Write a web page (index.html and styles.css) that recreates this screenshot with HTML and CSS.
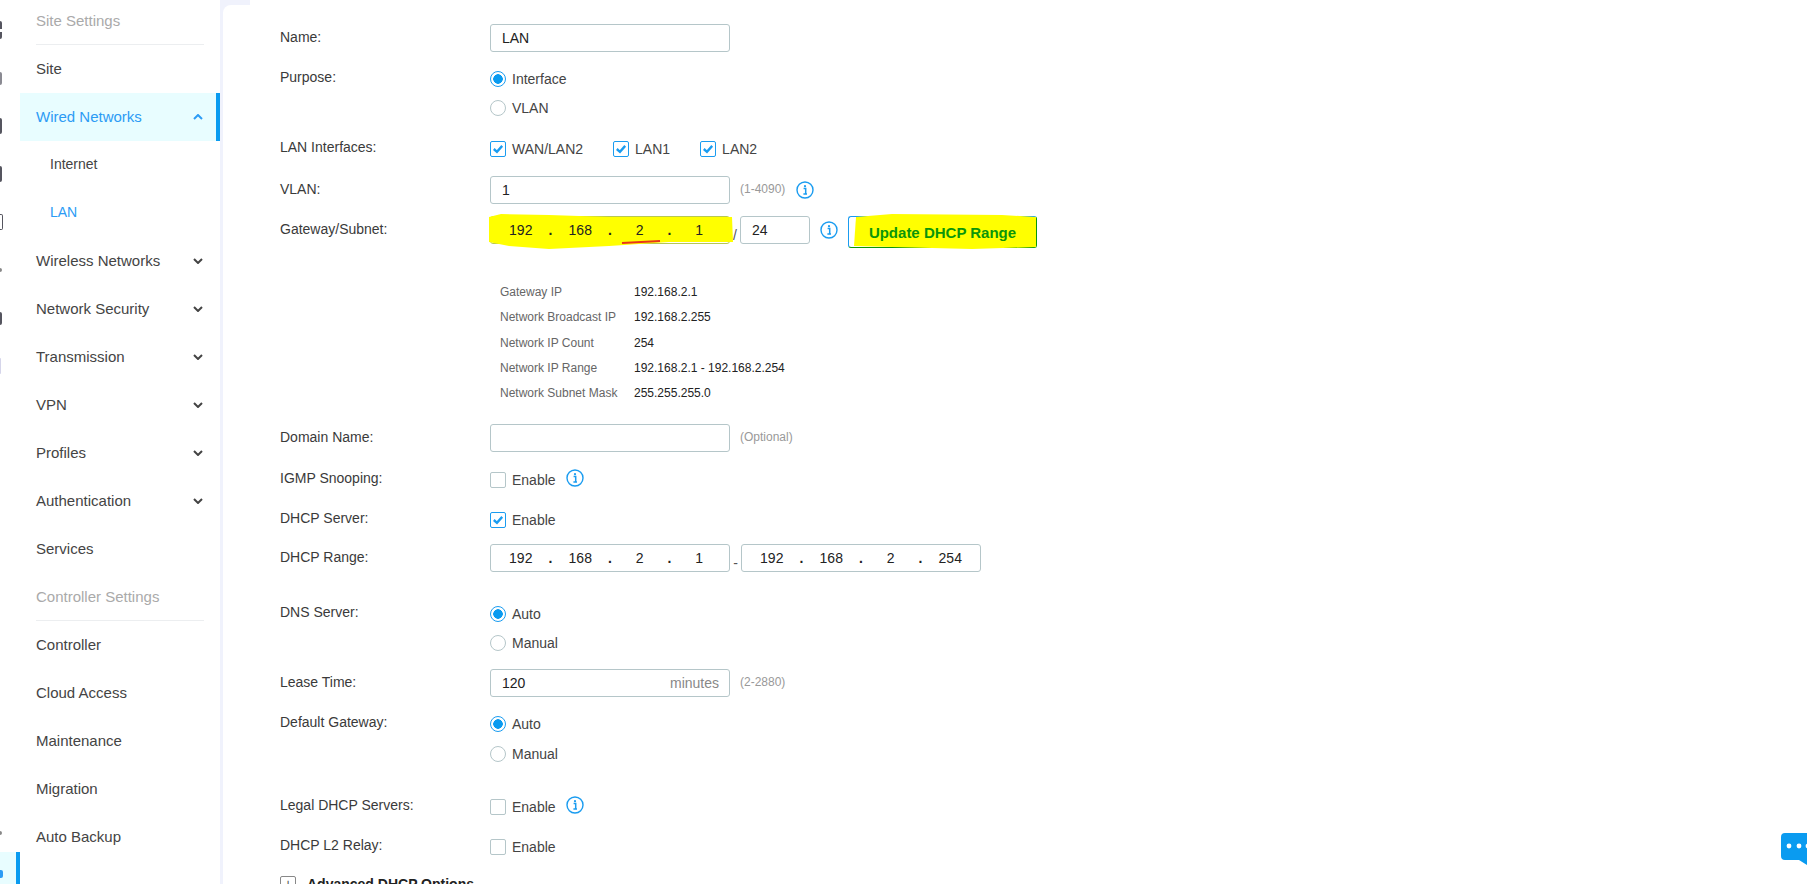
FILE: index.html

```html
<!DOCTYPE html>
<html>
<head>
  <title>LAN Settings</title>
  <meta name="viewport" content="width=device-width, initial-scale=1.0" />
  <link rel="stylesheet" href="styles.css">
</head>
<body>
  <svg class="defs" width="0" height="0">
    <symbol id="info" viewBox="0 0 18 18">
      <circle cx="9" cy="9" r="8" fill="none" stroke="currentColor" stroke-width="1.4" />
      <circle cx="9" cy="5.2" r="1.1" fill="currentColor" />
      <path d="M7.6 7.6H9.7V12.6M7.4 13.1H11" fill="none" stroke="currentColor" stroke-width="1.5" />
    </symbol>
    <symbol id="down" viewBox="0 0 10 6">
      <path d="M1 1L5 5L9 1" fill="none" stroke="currentColor" stroke-width="2" />
    </symbol>
    <symbol id="up" viewBox="0 0 10 6">
      <path d="M1 5L5 1L9 5" fill="none" stroke="currentColor" stroke-width="2" />
    </symbol>
    <symbol id="tick" viewBox="0 0 16 16">
      <path d="M3.2 8L6.8 11.2L12.8 4.4" fill="none" stroke="currentColor" stroke-width="2.7" />
    </symbol>
  </svg>

  <div class="rail">
    <span class="rail-slot"><i class="mark mark-split"></i></span>
    <span class="rail-slot"><i class="mark mark-md mark-soft"></i></span>
    <span class="rail-slot"><i class="mark mark-lg"></i></span>
    <span class="rail-slot"><i class="mark mark-lg"></i></span>
    <span class="rail-slot"><i class="mark mark-lg mark-open"></i></span>
    <span class="rail-slot"><i class="mark mark-dot"></i></span>
    <span class="rail-slot"><i class="mark mark-md"></i></span>
    <span class="rail-slot"><i class="mark mark-lg mark-pale"></i></span>
    <span class="rail-slot rail-push"><i class="mark mark-dot"></i></span>
    <span class="rail-active"><i class="mark mark-blue"></i></span>
  </div>

  <nav class="sidebar">
    <div class="nav-head">Site Settings</div>
    <a class="nav-item">Site</a>
    <a class="nav-item active">Wired Networks <svg class="chevron"><use href="#up" /></svg></a>
    <a class="nav-item sub">Internet</a>
    <a class="nav-item sub current">LAN</a>
    <a class="nav-item">Wireless Networks <svg class="chevron"><use href="#down" /></svg></a>
    <a class="nav-item">Network Security <svg class="chevron"><use href="#down" /></svg></a>
    <a class="nav-item">Transmission <svg class="chevron"><use href="#down" /></svg></a>
    <a class="nav-item">VPN <svg class="chevron"><use href="#down" /></svg></a>
    <a class="nav-item">Profiles <svg class="chevron"><use href="#down" /></svg></a>
    <a class="nav-item">Authentication <svg class="chevron"><use href="#down" /></svg></a>
    <a class="nav-item">Services</a>
    <div class="nav-head nav-head-tall">Controller Settings</div>
    <a class="nav-item">Controller</a>
    <a class="nav-item">Cloud Access</a>
    <a class="nav-item">Maintenance</a>
    <a class="nav-item">Migration</a>
    <a class="nav-item">Auto Backup</a>
  </nav>

  <main class="main">
    <div class="row">
      <div class="row-label">Name:</div>
      <div class="inline"><div class="input">LAN</div></div>
    </div>

    <div class="row mt-17 row-choice">
      <div class="row-label">Purpose:</div>
      <div class="stack">
        <div class="opt"><span class="radio on"></span>Interface</div>
        <div class="opt"><span class="radio"></span>VLAN</div>
      </div>
    </div>

    <div class="row mt-21 row-choice">
      <div class="row-label">LAN Interfaces:</div>
      <div class="inline wide">
        <div class="opt"><span class="check on"><svg><use href="#tick" /></svg></span>WAN/LAN2</div>
        <div class="opt"><span class="check on"><svg><use href="#tick" /></svg></span>LAN1</div>
        <div class="opt"><span class="check on"><svg><use href="#tick" /></svg></span>LAN2</div>
      </div>
    </div>

    <div class="row mt-17">
      <div class="row-label">VLAN:</div>
      <div class="inline">
        <div class="input">1</div>
        <span class="hint">(1-4090)</span>
        <svg class="info"><use href="#info" /></svg>
      </div>
    </div>

    <div class="row mt-12">
      <div class="row-label">Gateway/Subnet:</div>
      <div class="inline">
        <div class="input ip-input marked">
          <svg class="marker" viewBox="0 0 244 36" preserveAspectRatio="none">
            <path d="M0 3L12 0L60 1L120 3L243 3L244 28L180 28L120 32L60 35L20 32L0 28Z" fill="#ffff00" />
            <path d="M133 29L171 27" fill="none" stroke="#e8351a" stroke-width="2" />
          </svg>
          <span class="octet">192</span><span class="dot">.</span>
          <span class="octet">168</span><span class="dot">.</span>
          <span class="octet">2</span><span class="dot">.</span>
          <span class="octet">1</span>
        </div>
        <span class="sep">/</span>
        <div class="input input-mask">24</div>
        <svg class="info info-gateway"><use href="#info" /></svg>
        <button class="update-btn">
          <svg class="marker" viewBox="0 0 184 36" preserveAspectRatio="none">
            <path d="M4 3L40 0L150 1L184 3L184 33L120 35L40 33L2 32Z" fill="#ffff00" />
          </svg>
          <span class="update-text">Update DHCP Range</span>
        </button>
      </div>
    </div>

    <div class="details">
      <div class="detail"><span class="detail-key">Gateway IP</span><span>192.168.2.1</span></div>
      <div class="detail"><span class="detail-key">Network Broadcast IP</span><span>192.168.2.255</span></div>
      <div class="detail"><span class="detail-key">Network IP Count</span><span>254</span></div>
      <div class="detail"><span class="detail-key">Network IP Range</span><span>192.168.2.1 - 192.168.2.254</span></div>
      <div class="detail"><span class="detail-key">Network Subnet Mask</span><span>255.255.255.0</span></div>
    </div>

    <div class="row mt-18">
      <div class="row-label">Domain Name:</div>
      <div class="inline">
        <div class="input"></div>
        <span class="hint">(Optional)</span>
      </div>
    </div>

    <div class="row mt-18 row-choice">
      <div class="row-label">IGMP Snooping:</div>
      <div class="inline">
        <div class="opt"><span class="check"></span>Enable</div>
        <svg class="info info-opt"><use href="#info" /></svg>
      </div>
    </div>

    <div class="row mt-20 row-choice">
      <div class="row-label">DHCP Server:</div>
      <div class="inline">
        <div class="opt"><span class="check on"><svg><use href="#tick" /></svg></span>Enable</div>
      </div>
    </div>

    <div class="row mt-14">
      <div class="row-label">DHCP Range:</div>
      <div class="inline">
        <div class="input ip-input">
          <span class="octet">192</span><span class="dot">.</span>
          <span class="octet">168</span><span class="dot">.</span>
          <span class="octet">2</span><span class="dot">.</span>
          <span class="octet">1</span>
        </div>
        <span class="sep">-</span>
        <div class="input ip-input">
          <span class="octet">192</span><span class="dot">.</span>
          <span class="octet">168</span><span class="dot">.</span>
          <span class="octet">2</span><span class="dot">.</span>
          <span class="octet">254</span>
        </div>
      </div>
    </div>

    <div class="row mt-32 row-choice">
      <div class="row-label">DNS Server:</div>
      <div class="stack">
        <div class="opt"><span class="radio on"></span>Auto</div>
        <div class="opt"><span class="radio"></span>Manual</div>
      </div>
    </div>

    <div class="row mt-16">
      <div class="row-label">Lease Time:</div>
      <div class="inline">
        <div class="input input-unit">120<span class="unit">minutes</span></div>
        <span class="hint">(2-2880)</span>
      </div>
    </div>

    <div class="row mt-17 row-choice">
      <div class="row-label">Default Gateway:</div>
      <div class="stack stack-loose">
        <div class="opt"><span class="radio on"></span>Auto</div>
        <div class="opt"><span class="radio"></span>Manual</div>
      </div>
    </div>

    <div class="row mt-33 row-choice">
      <div class="row-label">Legal DHCP Servers:</div>
      <div class="inline">
        <div class="opt"><span class="check"></span>Enable</div>
        <svg class="info info-opt"><use href="#info" /></svg>
      </div>
    </div>

    <div class="row mt-20 row-choice">
      <div class="row-label">DHCP L2 Relay:</div>
      <div class="inline">
        <div class="opt"><span class="check"></span>Enable</div>
      </div>
    </div>

    <div class="advanced"><span class="plus">+</span>Advanced DHCP Options</div>
  </main>

  <svg class="chat" viewBox="0 0 26 32">
    <path d="M4 0H26V32L18 27H4Q0 27 0 23V4Q0 0 4 0Z" fill="#0a9bf0" />
    <circle cx="8" cy="13" r="2.4" fill="#fff" />
    <circle cx="18" cy="13" r="2.4" fill="#fff" />
    <circle cx="27" cy="13" r="2.4" fill="#fff" />
  </svg>
</body>
</html>
```

FILE: styles.css

```css
* { box-sizing: border-box; }
html, body { margin: 0; padding: 0; height: 884px; overflow: hidden; }
body { display: flex; font-family: "Liberation Sans", Arial, sans-serif; font-size: 14px; color: #333; background: #fff; }
.defs { position: absolute; }

/* left rail, mostly scrolled off the picture */
.rail { width: 20px; height: 884px; flex: none; display: flex; flex-direction: column; padding-top: 6px; }
.rail-slot { height: 48px; display: flex; align-items: center; flex: none; }
.rail-push { margin-top: auto; height: 38px; }
.rail-active { height: 32px; flex: none; display: flex; align-items: flex-end; padding-bottom: 6px; background: #e8fdff; border-right: 4px solid #0a9bf0; }
.mark { display: block; width: 2px; background: #55555f; border-radius: 0 2px 2px 0; }
.mark-md { height: 13px; }
.mark-lg { height: 16px; }
.mark-dot { height: 4px; background: #888; }
.mark-soft { background: #8a8a92; width: 2px; }
.mark-open { width: 3px; background: #fff; border: 1px solid #55555f; border-left: 0; }
.mark-pale { background: #d5d5ea; width: 1px; }
.mark-split { height: 18px; background: linear-gradient(#55555f 0 8px, #fff 8px 11px, #55555f 11px); }
.mark-blue { width: 3px; height: 8px; background: #2c9bf5; }

/* settings menu */
.sidebar { width: 200px; flex: none; font-size: 15px; }
.nav-head { height: 45px; line-height: 42px; margin: 0 16px; color: #aaa; border-bottom: 1px solid #eceef0; white-space: nowrap; }
.nav-head-tall { height: 48px; line-height: 47px; }
.nav-item { height: 48px; padding: 0 16px 2px; display: flex; align-items: center; justify-content: space-between; color: #444; }
.nav-item.active { background: #e8fdff; color: #2c9bf5; border-right: 4px solid #0a9bf0; padding-right: 12px; }
.nav-item.sub { padding-left: 30px; font-size: 14px; }
.nav-item.current { color: #2c9bf5; }
.chevron { width: 10px; height: 6px; margin: 2px 1px 0 0; color: #444; }
.active .chevron { color: #2c9bf5; }

/* form area */
.main { position: relative; flex: 1; padding: 24px 0 0 57px; border-left: 3px solid #f0f2fc; }
.main::before { content: ""; position: absolute; left: -3px; top: 0; width: 30px; height: 15px; background: #f0f2fc; }
.main::after { content: ""; position: absolute; left: 0; top: 5px; width: 27px; height: 12px; background: #fff; border-radius: 8px 0 0 0; }
.row { display: grid; grid-template-columns: 210px 1fr; align-items: start; }
.row-label { padding-top: 3px; line-height: 20px; color: #3a3a3a; }
.row-choice .row-label { padding-top: 0; margin-top: -2px; }
.mt-12 { margin-top: 12px; }
.mt-14 { margin-top: 14px; }
.mt-16 { margin-top: 16px; }
.mt-17 { margin-top: 17px; }
.mt-18 { margin-top: 18px; }
.mt-20 { margin-top: 20px; }
.mt-21 { margin-top: 21px; }
.mt-32 { margin-top: 32px; }
.mt-33 { margin-top: 33px; }

.inline { display: flex; align-items: flex-start; }
.wide .opt { margin-right: 30px; }
.stack { display: flex; flex-direction: column; gap: 9px; }
.stack-loose { gap: 10px; }
.opt { display: flex; align-items: center; height: 20px; color: #444; }

.input { position: relative; width: 240px; height: 28px; flex: none; padding: 0 11px; line-height: 27px; color: #222; background: #fff; border: 1px solid #b5c6c9; border-radius: 3px; }
.input-mask { width: 70px; }
.input-unit { display: flex; justify-content: space-between; padding-right: 10px; }
.unit { color: #888; }
.ip-input { display: flex; padding: 0; }
.octet { position: relative; flex: 1; text-align: center; }
.dot { position: relative; width: 0; display: flex; justify-content: center; font-weight: bold; }
.marked { border-color: #b8c850; }
.marker { position: absolute; left: -2px; top: -3px; width: 244px; height: 36px; }

.sep { width: 11px; flex: none; height: 28px; line-height: 38px; text-align: center; color: #555; }
.marked + .sep { width: 10px; }
.hint { margin-left: 10px; line-height: 27px; font-size: 12px; color: #999; }
.info { width: 18px; height: 18px; margin: 5px 0 0 11px; color: #1a9cf0; flex: none; }
.info-gateway { margin-left: 10px; }
.info-opt { margin: -1px 0 0 10px; }

.radio, .check { width: 16px; height: 16px; flex: none; margin-right: 6px; background: #fff; border: 1px solid #b5c6c9; }
.radio { border-radius: 50%; }
.radio.on { border-color: #1a9cf0; background: radial-gradient(circle, #0a9bf0 0 4.5px, #fff 5px); }
.check { border-radius: 2px; }
.check.on { border-color: #1a9cf0; color: #1a9cf0; }
.check svg { display: block; width: 14px; height: 14px; }

.update-btn { position: relative; width: 189px; height: 32px; margin-left: 10px; padding: 0; font: bold 15px "Liberation Sans", Arial, sans-serif; color: #0a960a; background: #fff; border: 1px solid #1a9cf0; border-right-color: #0a960a; border-bottom-color: #0a960a; border-radius: 3px; }
.update-btn .marker { left: 3px; top: -3px; width: 184px; }
.update-text { position: relative; }

.details { margin: 32px 0 0 220px; }
.detail { display: flex; height: 25.3px; line-height: 25px; font-size: 12px; color: #222; }
.detail-key { width: 134px; color: #666; }

.advanced { display: flex; align-items: center; margin-top: 19px; font-weight: bold; color: #222; }
.plus { width: 16px; height: 16px; margin-right: 11px; line-height: 14px; text-align: center; font-weight: normal; color: #555; border: 1px solid #888; border-radius: 2px; }

.chat { position: absolute; left: 1781px; top: 833px; width: 26px; height: 32px; overflow: hidden; }
```
